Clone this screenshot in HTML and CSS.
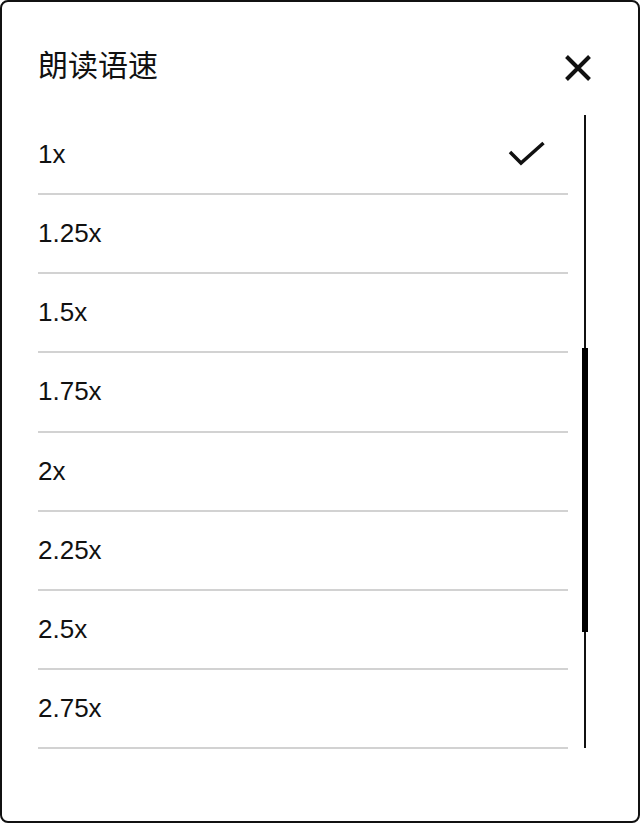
FILE: index.html
```html
<!DOCTYPE html>
<html lang="zh-CN">
<head>
<meta charset="utf-8">
<title>朗读语速</title>
<link rel="stylesheet" href="styles.css">
</head>
<body>
<div class="frame">
  <div class="header">
    <div class="title">朗读语速</div>
    <svg class="close" width="28" height="28" viewBox="0 0 28 28" aria-label="关闭">
      <path d="M2.5 2.5 L25.5 25.5 M25.5 2.5 L2.5 25.5" stroke="#111" stroke-width="4" fill="none"/>
    </svg>
  </div>
  <div class="body">
    <ul class="list">
      <li class="row"><span>1x</span>
        <svg class="check" width="38" height="26" viewBox="0 0 38 26">
          <path d="M2 11 L13 22 L35.5 2" stroke="#111" stroke-width="3.5" fill="none"/>
        </svg>
      </li>
      <li class="row"><span>1.25x</span></li>
      <li class="row"><span>1.5x</span></li>
      <li class="row"><span>1.75x</span></li>
      <li class="row"><span>2x</span></li>
      <li class="row"><span>2.25x</span></li>
      <li class="row"><span>2.5x</span></li>
      <li class="row"><span>2.75x</span></li>
    </ul>
    <div class="track">
      <div class="thumb"></div>
    </div>
  </div>
</div>
</body>
</html>
```

FILE: styles.css
```css
html, body {
  margin: 0;
  padding: 0;
  background: #fff;
}

.frame {
  width: 640px;
  height: 823px;
  box-sizing: border-box;
  border: 2px solid #111;
  border-radius: 8px;
  background: #fff;
  display: flex;
  flex-direction: column;
  color: #111;
  font-family: "Liberation Sans", "Noto Sans CJK SC", sans-serif;
}

.header {
  height: 113px;
  box-sizing: border-box;
  padding: 46px 46px 0 36px;
  display: flex;
  justify-content: space-between;
  align-items: flex-start;
}

.title {
  font-family: "Noto Sans CJK SC", sans-serif;
  font-size: 30px;
  line-height: 30px;
  font-weight: 400;
}

.close {
  display: block;
  margin-top: 6px;
}

.body {
  display: flex;
  align-items: flex-start;
  padding-left: 36px;
}

.list {
  list-style: none;
  margin: 0;
  padding: 1px 0 0;
  width: 530px;
}

.row {
  height: 77.14px;
  border-bottom: 2px solid #d2d2d2;
  display: flex;
  align-items: center;
  justify-content: space-between;
  padding-right: 22px;
  font-size: 26px;
}

.check {
  display: block;
  margin-top: -2px;
}

.track {
  position: relative;
  margin-left: 16px;
  width: 2px;
  height: 633px;
  background: #111;
}

.thumb {
  position: absolute;
  left: -2px;
  top: 233px;
  width: 6px;
  height: 284px;
  background: #000;
}
```
